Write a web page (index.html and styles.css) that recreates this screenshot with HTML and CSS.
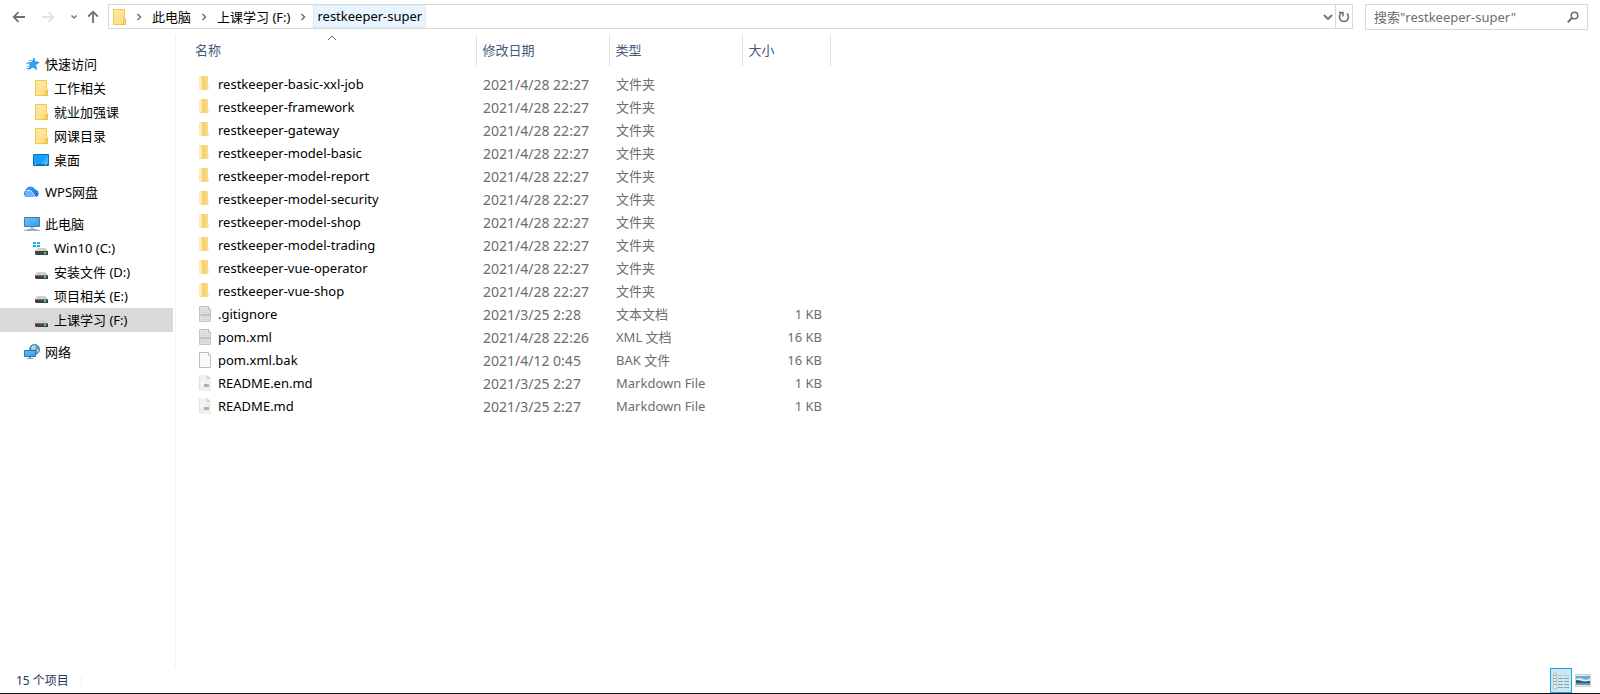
FILE: index.html
```
<!DOCTYPE html>
<html lang="zh-CN">
<head>
<meta charset="utf-8">
<meta name="viewport" content="width=device-width, initial-scale=1">
<title>restkeeper-super</title>
<link rel="stylesheet" href="styles.css">
</head>
<body>
<svg class="sprite" aria-hidden="true">
  <defs>
    <linearGradient id="g-folder" x1="0" x2="1" y1="0" y2="1"><stop offset="0" stop-color="#ffeba6"/><stop offset="1" stop-color="#fcdd7d"/></linearGradient>
    <linearGradient id="g-row" x1="0" x2="1" y1="0" y2="0"><stop offset="0" stop-color="#f2cc68"/><stop offset="1" stop-color="#fbde8c"/></linearGradient>
    <linearGradient id="g-screen" x1="0" x2="1" y1="0" y2="1"><stop offset="0" stop-color="#69c3fa"/><stop offset="1" stop-color="#2d9df0"/></linearGradient>
    <linearGradient id="g-cloud" x1="0" x2="1" y1="0" y2="1"><stop offset="0" stop-color="#45a5ff"/><stop offset="1" stop-color="#1469e8"/></linearGradient>
    <symbol id="folder" viewBox="0 0 16 16">
      <path d="M2.500 .5h11v10.500h1v4.500h-12z" fill="url(#g-folder)" stroke="#edc94f"/>
      <path d="M12.500 15.500v-4l1-1.500h1v5.500z" fill="#fbe192" stroke="#e8bd3d"/>
    </symbol>
    <symbol id="row-folder" viewBox="0 0 16 16">
      <path d="M3 0h7v10h1v4H4z" fill="url(#g-row)"/>
      <path d="M1 0l3 1.500V15l-3-1.500z" fill="#ffebb0"/>
      <path d="M10 10.500h1V14h-1z" fill="#fff0bd"/>
    </symbol>
    <symbol id="text-file" viewBox="0 0 16 16">
      <path d="M1.500 .5h9l2 3v12h-11z" fill="#e0e1e1" stroke="#c4c6c6"/>
      <path d="M10.500 .5v3h2" fill="#fff" stroke="#b4b6b6"/>
      <path d="M3 4.500h5M3 6.500h8M3 11.500h8M3 13.500h8" stroke="#d3d5d5"/>
      <path d="M2 8h10v2H2z" fill="#c0c2c2"/>
    </symbol>
    <symbol id="blank-file" viewBox="0 0 16 16">
      <path d="M1.500 .5h9l2 3v12h-11z" fill="#f9fafb" stroke="#bbbebf"/>
      <path d="M10.500 .5v3h2" fill="#fff" stroke="#bbbebf"/>
    </symbol>
    <symbol id="md-file" viewBox="0 0 16 16">
      <path d="M1 0h9l3 4v12H1z" fill="#f0f0f1"/>
      <path d="M9 0l4 4H9z" fill="#d3d4d5"/>
      <path d="M1.500 1v14" stroke="#e1e2e2"/>
      <path d="M3 7h4M3 9h2" stroke="#fff"/>
      <path d="M6 9h5v3H6z" fill="#aeb0b2"/>
    </symbol>
    <symbol id="star" viewBox="0 0 16 16">
      <path d="M10 2l1 3.700 4 .6-3.400 2.500 1 4.700-3.600-2.500-4.300 2.500 1.500-4.500L4 6.500h4z" fill="#2ba5f2" stroke="#1885d2" stroke-width=".7"/>
      <path d="M5 4.500h3M2 7.500h4M3 10.500h3M2 12.500h3" stroke="#77bfee"/>
    </symbol>
    <symbol id="desktop" viewBox="0 0 16 16">
      <path d="M.5 2.500h15v11H.5z" fill="#18a0fb" stroke="#0872bd"/>
      <path d="M7 13l8-9v9z" fill="#42b2fc"/>
      <path d="M1 12.500h1m1 0h9m1 0h2" stroke="#0b6db5"/>
      <path d="M2 12.500h1m9 0h1" stroke="#d8f0ff"/>
    </symbol>
    <symbol id="cloud" viewBox="0 0 16 16">
      <path d="M3.500 13A3.500 3.500 0 0 1 1.500 6.500 5 5 0 0 1 11 5.500a4 4 0 0 1 1.500 7.500z" fill="url(#g-cloud)"/>
      <path d="M2 7q4-2 6 1t3.500 5h-8A3.500 3.500 0 0 1 2 7z" fill="#6cb3fb"/>
      <path d="M3 6.500q4-1 5.500 2t3.500 4.500" fill="none" stroke="#fff" stroke-width=".8"/>
    </symbol>
    <symbol id="pc" viewBox="0 0 16 16">
      <path d="M.5 1.500h15v9H.5z" fill="url(#g-screen)" stroke="#3c7fa9"/>
      <path d="M6 11h4v2H6z" fill="#b9c7d1"/>
      <path d="M0 14.500h16M3 13.500h10" stroke="#9cabb6"/>
    </symbol>
    <symbol id="drive" viewBox="0 0 16 16">
      <path d="M4 8h8l3 3H2z" fill="#d0d0d0"/>
      <path d="M2 11h13v4H3l-1-1z" fill="#414141"/>
      <path d="M2 11.500h13" stroke="#777"/>
      <path d="M11 12h2v2h-2z" fill="#34e34b"/>
    </symbol>
    <symbol id="win-drive" viewBox="0 0 16 16">
      <path d="M5 8h7l3 3H2z" fill="#cfcfcf"/>
      <path d="M2 11h13v4H3l-1-1z" fill="#454545"/>
      <path d="M11 12h2v2h-2z" fill="#34e34b"/>
      <path d="M0 2h3v2H0zm4 0h3v2H4zM0 5h3v2H0zm4 0h3v2H4z" fill="#12b5ee"/>
    </symbol>
    <symbol id="network" viewBox="0 0 16 16">
      <circle cx="10.500" cy="5.500" r="5" fill="#5e9fbe" stroke="#487e9c"/>
      <path d="M8 2l3-1 1 3-2 2-3-1zM13 5l2 1-2 3z" fill="#b4d9df"/>
      <path d="M.5 6.500h11v6H.5z" fill="url(#g-screen)" stroke="#2877b1"/>
      <path d="M5 13h2v1H5zM3 14h6v1H3z" fill="#8c9da8"/>
    </symbol>
    <symbol id="chevron" viewBox="0 0 8 8"><path d="M2.500 1l3 3-3 3" fill="none" stroke="#707070" stroke-width="1.500"/></symbol>
  </defs>
</svg>

<div class="explorer">
  <header class="toolbar">
    <nav class="history" aria-label="导航">
      <button class="icon-btn" aria-label="后退"><svg width="14" height="12" viewBox="0 0 14 12"><path d="M13 6H2M6.500 1.200L1.700 6l4.800 4.800" fill="none" stroke="#707070" stroke-width="1.800"/></svg></button>
      <button class="icon-btn" aria-label="前进" disabled><svg width="14" height="12" viewBox="0 0 14 12"><path d="M1 6h11M7.500 1.200L12.300 6l-4.800 4.800" fill="none" stroke="#dcdcdc" stroke-width="1.600"/></svg></button>
      <button class="icon-btn recent" aria-label="最近浏览的位置"><svg width="8" height="8" viewBox="0 0 8 8"><path d="M1.500 2.500L4 5l2.500-2.500" fill="none" stroke="#777" stroke-width="1.500"/></svg></button>
      <button class="icon-btn" aria-label="上移"><svg width="12" height="13" viewBox="0 0 12 13"><path d="M6 13V2M1.200 6.500L6 1.700l4.800 4.800" fill="none" stroke="#707070" stroke-width="1.800"/></svg></button>
    </nav>
    <div class="address">
      <svg class="icon"><use href="#folder"/></svg>
      <svg class="chev"><use href="#chevron"/></svg>
      <a class="crumb" href="#">此电脑</a>
      <svg class="chev"><use href="#chevron"/></svg>
      <a class="crumb" href="#">上课学习 (F:)</a>
      <svg class="chev"><use href="#chevron"/></svg>
      <a class="crumb current" href="#">restkeeper-super</a>
      <button class="drop" aria-label="以前的位置"><svg width="10" height="8" viewBox="0 0 10 8"><path d="M1 2l4 4 4-4" fill="none" stroke="#707070" stroke-width="1.800"/></svg></button>
      <button class="refresh" aria-label="刷新"><svg width="12" height="12" viewBox="0 0 12 12"><path d="M3.500 2.200A4.500 4.500 0 1 0 9 2.700" fill="none" stroke="#707070" stroke-width="1.600"/><path d="M1 1.500h4v4" fill="none" stroke="#707070" stroke-width="1.500"/></svg></button>
    </div>
    <label class="search">
      <input type="text" aria-label="搜索" placeholder="搜索&quot;restkeeper-super&quot;">
      <svg width="12" height="12" viewBox="0 0 12 12"><circle cx="7.500" cy="4.500" r="3.300" fill="none" stroke="#707070" stroke-width="1.600"/><path d="M5.200 6.800L.8 11.200" stroke="#707070" stroke-width="2"/></svg>
    </label>
  </header>

  <main class="body">
    <nav class="sidebar" aria-label="导航窗格">
      <div class="group">
        <a class="node root" href="#"><svg class="icon"><use href="#star"/></svg>快速访问</a>
        <a class="node" href="#"><svg class="icon"><use href="#folder"/></svg>工作相关</a>
        <a class="node" href="#"><svg class="icon"><use href="#folder"/></svg>就业加强课</a>
        <a class="node" href="#"><svg class="icon"><use href="#folder"/></svg>网课目录</a>
        <a class="node" href="#"><svg class="icon"><use href="#desktop"/></svg>桌面</a>
      </div>
      <div class="group">
        <a class="node root" href="#"><svg class="icon"><use href="#cloud"/></svg>WPS网盘</a>
      </div>
      <div class="group">
        <a class="node root" href="#"><svg class="icon"><use href="#pc"/></svg>此电脑</a>
        <a class="node" href="#"><svg class="icon"><use href="#win-drive"/></svg>Win10 (C:)</a>
        <a class="node" href="#"><svg class="icon"><use href="#drive"/></svg>安装文件 (D:)</a>
        <a class="node" href="#"><svg class="icon"><use href="#drive"/></svg>项目相关 (E:)</a>
        <a class="node selected" href="#"><svg class="icon"><use href="#drive"/></svg>上课学习 (F:)</a>
      </div>
      <div class="group">
        <a class="node root" href="#"><svg class="icon"><use href="#network"/></svg>网络</a>
      </div>
    </nav>

    <section class="content">
      <table class="files">
        <colgroup><col class="c-name"><col class="c-date"><col class="c-type"><col class="c-size"></colgroup>
        <thead>
          <tr>
            <th>名称<svg class="sort" width="10" height="6" viewBox="0 0 10 6"><path d="M1 5l4-4 4 4" fill="none" stroke="#666"/></svg></th>
            <th>修改日期</th><th>类型</th><th>大小</th>
          </tr>
        </thead>
        <tbody>
          <tr><td><svg class="icon"><use href="#row-folder"/></svg>restkeeper-basic-xxl-job</td><td class="date">2021/4/28 22:27</td><td>文件夹</td><td></td></tr>
          <tr><td><svg class="icon"><use href="#row-folder"/></svg>restkeeper-framework</td><td class="date">2021/4/28 22:27</td><td>文件夹</td><td></td></tr>
          <tr><td><svg class="icon"><use href="#row-folder"/></svg>restkeeper-gateway</td><td class="date">2021/4/28 22:27</td><td>文件夹</td><td></td></tr>
          <tr><td><svg class="icon"><use href="#row-folder"/></svg>restkeeper-model-basic</td><td class="date">2021/4/28 22:27</td><td>文件夹</td><td></td></tr>
          <tr><td><svg class="icon"><use href="#row-folder"/></svg>restkeeper-model-report</td><td class="date">2021/4/28 22:27</td><td>文件夹</td><td></td></tr>
          <tr><td><svg class="icon"><use href="#row-folder"/></svg>restkeeper-model-security</td><td class="date">2021/4/28 22:27</td><td>文件夹</td><td></td></tr>
          <tr><td><svg class="icon"><use href="#row-folder"/></svg>restkeeper-model-shop</td><td class="date">2021/4/28 22:27</td><td>文件夹</td><td></td></tr>
          <tr><td><svg class="icon"><use href="#row-folder"/></svg>restkeeper-model-trading</td><td class="date">2021/4/28 22:27</td><td>文件夹</td><td></td></tr>
          <tr><td><svg class="icon"><use href="#row-folder"/></svg>restkeeper-vue-operator</td><td class="date">2021/4/28 22:27</td><td>文件夹</td><td></td></tr>
          <tr><td><svg class="icon"><use href="#row-folder"/></svg>restkeeper-vue-shop</td><td class="date">2021/4/28 22:27</td><td>文件夹</td><td></td></tr>
          <tr><td><svg class="icon"><use href="#text-file"/></svg>.gitignore</td><td class="date">2021/3/25 2:28</td><td>文本文档</td><td>1 KB</td></tr>
          <tr><td><svg class="icon"><use href="#text-file"/></svg>pom.xml</td><td class="date">2021/4/28 22:26</td><td>XML 文档</td><td>16 KB</td></tr>
          <tr><td><svg class="icon"><use href="#blank-file"/></svg>pom.xml.bak</td><td class="date">2021/4/12 0:45</td><td>BAK 文件</td><td>16 KB</td></tr>
          <tr><td><svg class="icon"><use href="#md-file"/></svg>README.en.md</td><td class="date">2021/3/25 2:27</td><td>Markdown File</td><td>1 KB</td></tr>
          <tr><td><svg class="icon"><use href="#md-file"/></svg>README.md</td><td class="date">2021/3/25 2:27</td><td>Markdown File</td><td>1 KB</td></tr>
        </tbody>
      </table>
    </section>
  </main>

  <footer class="status">
    <span class="count">15 个项目</span>
    <div class="views">
      <button class="view active" aria-label="详细信息"><svg width="16" height="16" viewBox="0 0 16 16"><path d="M.5 .5h3v15h-3z" fill="#f4f1ee" stroke="#b9c5ca"/><path d="M1 2.500h2M1 5.500h2M1 8.500h2M1 11.500h2" stroke="#b58d7e"/><path d="M5 2.500h5m1 0h5" stroke="#b4c6ce"/><path d="M5 5.500h5m1 0h5M5 8.500h5m1 0h5M5 11.500h5m1 0h5M5 14.500h5m1 0h5" stroke="#8ea3ad"/></svg></button>
      <button class="view" aria-label="大图标"><svg width="16" height="13" viewBox="0 0 16 13"><path d="M.5 .5h15v12H.5z" fill="#e9e9e9" stroke="#cfcfcf"/><path d="M1 2h14v9H1z" fill="#6ba5f0"/><path d="M1 5q3-2 7 0t7-1v3H1z" fill="#d7e9f5"/><path d="M1 6q5 0 8 2l6-1v2H1z" fill="#2f5e4d"/><path d="M1 9h14v2H1z" fill="#5c9ab5"/></svg></button>
    </div>
  </footer>
</div>
</body>
</html>
```
FILE: styles.css
```
* { box-sizing: border-box; }

body {
  margin: 0;
  background: #fff;
  color: #000;
  font: 13px/24px "Noto Sans", "Noto Sans CJK SC", sans-serif;
}

a { color: inherit; text-decoration: none; }

button {
  display: flex;
  align-items: center;
  justify-content: center;
  padding: 0;
  border: 0;
  background: none;
}

.sprite { position: absolute; width: 0; height: 0; }

.icon { flex: none; width: 16px; height: 16px; }

.explorer {
  display: flex;
  flex-direction: column;
  min-height: 100vh;
  border-bottom: 1px solid #111;
}

/* Toolbar */
.toolbar {
  display: flex;
  align-items: flex-start;
  padding: 4px 12px 5px;
}

.history {
  display: flex;
  gap: 15px;
  width: 96px;
  height: 25px;
}

.history .recent { margin-right: -6px; }

.address {
  flex: 1;
  display: flex;
  align-items: center;
  height: 25px;
  padding-left: 2px;
  border: 1px solid #d9d9d9;
}

.chev { flex: none; width: 8px; height: 8px; margin: 0 2px 0 3px; }
.address .icon + .chev { margin-left: 8px; }

.crumb { padding: 0 6px 0 7px; white-space: nowrap; line-height: 22px; }

.crumb.current {
  margin-left: 4px;
  padding: 0 3px;
  border: 1px solid #d9ebf9;
  background: #e9f4fe;
  line-height: 21px;
}

.drop { width: 14px; height: 23px; margin-left: auto; }
.refresh { width: 17px; height: 23px; border-left: 1px solid #d9d9d9; }

.search {
  display: flex;
  align-items: center;
  width: 223px;
  height: 26px;
  margin-left: 12px;
  padding: 0 8px;
  border: 1px solid #d9d9d9;
}

.search input {
  flex: 1;
  min-width: 0;
  padding: 0;
  border: 0;
  outline: 0;
  background: none;
  font: inherit;
}

.search input::placeholder { color: #6d6d6d; opacity: 1; }

/* Navigation pane */
.body { flex: 1; display: flex; }

.sidebar {
  display: flex;
  flex-direction: column;
  gap: 8px;
  width: 176px;
  padding: 17px 2px 0 0;
  border-right: 1px solid #f2f2f2;
}

.node {
  display: flex;
  align-items: center;
  gap: 5px;
  height: 24px;
  padding-left: 33px;
  line-height: 22px;
  white-space: nowrap;
}

.node.root { padding-left: 24px; }
.node.selected { background: #d9d9d9; }

/* File list */
.content { flex: 1; min-width: 0; }

.files { table-layout: fixed; width: 654px; border-collapse: collapse; }
.c-name { width: 300px; }
.c-date { width: 133px; }
.c-type { width: 133px; }
.c-size { width: 88px; }

.files th {
  position: relative;
  height: 31px;
  padding: 0 6px 2px;
  border-right: 1px solid #e2e2e2;
  color: #44597a;
  font-weight: 400;
  text-align: left;
}

.files th:first-child { padding-left: 19px; }

.sort { position: absolute; top: 0; left: 151px; }

.files tbody::before { content: ""; display: block; height: 8px; }

.files td {
  height: 23px;
  padding: 0 7px;
  color: #6d6d6d;
  line-height: 21px;
  vertical-align: top;
  white-space: nowrap;
}

.files td:first-child { padding-left: 22px; color: #000; }
.files td:last-child { padding-right: 8px; text-align: right; }
.files td.date { font-size: 14px; }
.files td .icon { margin-right: 4px; vertical-align: -3px; }

/* Status bar */
.status {
  display: flex;
  align-items: center;
  height: 25px;
  margin-top: 1px;
  padding: 0 6px 0 16px;
}

.count {
  padding-right: 12px;
  border-right: 1px solid #f0f0f0;
  color: #1e395b;
  font-size: 12px;
  line-height: 12px;
}

.views { display: flex; margin-left: auto; }
.view { width: 22px; height: 25px; }
.view.active { border: 1px solid #26a0da; background: #cbe8f6; }
```
